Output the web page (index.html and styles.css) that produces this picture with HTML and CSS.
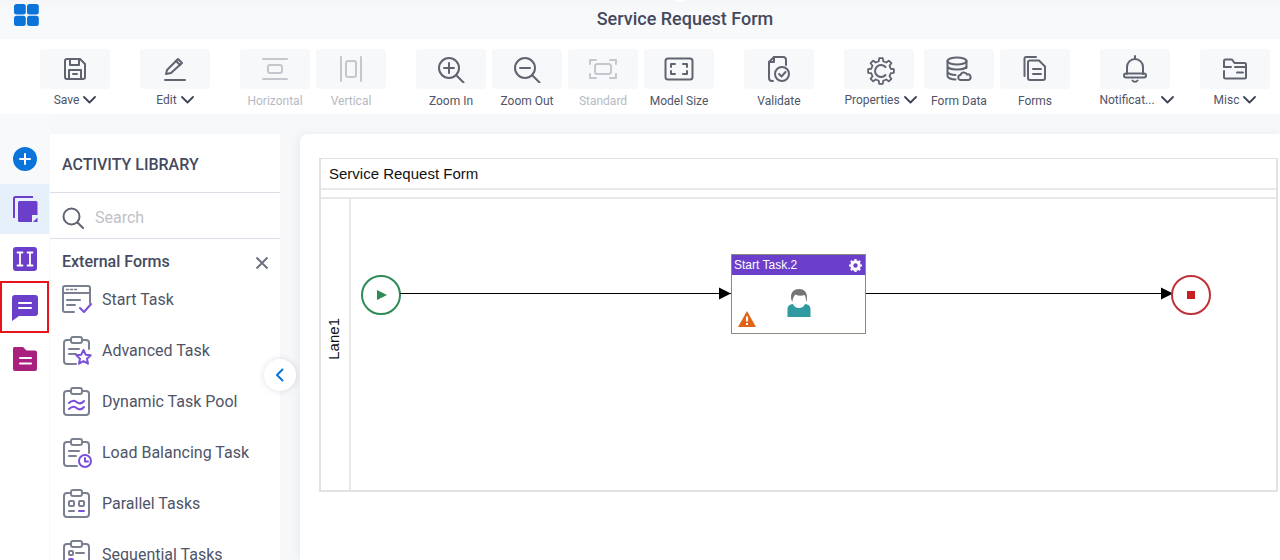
FILE: index.html
```html
<!DOCTYPE html>
<html lang="en">
<head>
<meta charset="utf-8">
<title>Service Request Form</title>
<link rel="stylesheet" href="styles.css">
</head>
<body>
<div class="app">
  <header class="topbar">
    <svg class="logo" width="25" height="22" viewBox="0 0 25 22"><rect x="0" y="0" width="11.800" height="10.500" rx="2.500"/><rect x="13" y="0" width="11.800" height="10.500" rx="2.500"/><rect x="0" y="11.800" width="11.800" height="10.200" rx="2.500"/><rect x="13" y="11.800" width="11.800" height="10.200" rx="2.500"/></svg>
    <h1 class="title">Service Request Form</h1>
    <span class="top-notch"></span>
  </header>

  <nav class="toolbar">
    <div class="tool">
      <div class="tool-btn"><svg class="ico" width="26" height="26" viewBox="0 0 26 26"><path d="M5 3h13l5 5v13a2 2 0 0 1-2 2H5a2 2 0 0 1-2-2V5a2 2 0 0 1 2-2z"/><path d="M8 3v6h9V3"/><path d="M7 23v-9h12v9"/><path d="M11 18h4"/></svg></div>
      <div class="tool-label drop">Save<svg class="chev" width="13" height="8" viewBox="0 0 13 8"><path d="M1 1l5.500 5.500L12 1"/></svg></div>
    </div>
    <div class="tool sep">
      <div class="tool-btn"><svg class="ico" width="26" height="26" viewBox="0 0 26 26"><path d="M4 18l1-4L16 3l4 4L9 17z"/><path d="M14 5l4 4"/><path d="M3 24h20"/></svg></div>
      <div class="tool-label drop">Edit<svg class="chev" width="13" height="8" viewBox="0 0 13 8"><path d="M1 1l5.500 5.500L12 1"/></svg></div>
    </div>
    <div class="tool sep off">
      <div class="tool-btn"><svg class="ico" width="26" height="26" viewBox="0 0 26 26"><path d="M1 3h24M1 23h24"/><rect x="6" y="9" width="14" height="8" rx="2"/></svg></div>
      <div class="tool-label">Horizontal</div>
    </div>
    <div class="tool off">
      <div class="tool-btn"><svg class="ico" width="26" height="26" viewBox="0 0 26 26"><path d="M3 1v24M23 1v24"/><rect x="8" y="5" width="10" height="16" rx="2"/></svg></div>
      <div class="tool-label">Vertical</div>
    </div>
    <div class="tool sep">
      <div class="tool-btn"><svg class="ico" width="28" height="28" viewBox="0 -1 28 28"><circle cx="12" cy="12" r="10"/><path d="M19.500 19.500l7 7M12 7v10M7 12h10"/></svg></div>
      <div class="tool-label">Zoom In</div>
    </div>
    <div class="tool">
      <div class="tool-btn"><svg class="ico" width="28" height="28" viewBox="0 -1 28 28"><circle cx="12" cy="12" r="10"/><path d="M19.500 19.500l7 7M7 12h10"/></svg></div>
      <div class="tool-label">Zoom Out</div>
    </div>
    <div class="tool off">
      <div class="tool-btn"><svg class="ico" width="30" height="24" viewBox="0 0 30 24"><path d="M2 7V3h6M22 3h6v4M28 17v4h-6M8 21H2v-4"/><rect x="7" y="7" width="16" height="10" rx="2.500"/></svg></div>
      <div class="tool-label">Standard</div>
    </div>
    <div class="tool">
      <div class="tool-btn"><svg class="ico" width="30" height="24" viewBox="0 0 30 24"><rect x="1.500" y="1.500" width="27" height="21" rx="2.500"/><path d="M7 10V7h4M19 7h4v3M23 14v3h-4M11 17H7v-3"/></svg></div>
      <div class="tool-label">Model Size</div>
    </div>
    <div class="tool sep">
      <div class="tool-btn"><svg class="ico" width="26" height="28" viewBox="0 0 26 28"><path d="M7 26H6a3 3 0 0 1-3-3V7l5-5h9a3 3 0 0 1 3 3v5"/><path d="M3 7h5V2"/><circle cx="16" cy="19" r="7"/><path d="M13 19l2.500 2.500L19.500 17"/></svg></div>
      <div class="tool-label">Validate</div>
    </div>
    <div class="tool sep">
      <div class="tool-btn"><svg class="ico" width="32" height="32" viewBox="-4 -4 32 32"><path class="thin" d="M11.750 4.260L12.190 1.130H15.810L16.250 4.260L19.300 5.520L21.820 3.620L24.380 6.180L22.480 8.700L23.740 11.750L26.870 12.190V15.810L23.740 16.250L22.480 19.300L24.380 21.820L21.820 24.380L19.300 22.480L16.250 23.740L15.810 26.870H12.190L11.750 23.740L8.700 22.480L6.180 24.380L3.620 21.820L5.520 19.300L4.260 16.250L1.130 15.810V12.190L4.260 11.750L5.520 8.700L3.620 6.180L6.180 3.620L8.700 5.520Z"/><path d="M18.500 10a6 6 0 1 0 0 8"/></svg></div>
      <div class="tool-label drop shift">Properties<svg class="chev" width="13" height="8" viewBox="0 0 13 8"><path d="M1 1l5.500 5.500L12 1"/></svg></div>
    </div>
    <div class="tool near">
      <div class="tool-btn"><svg class="ico" width="26" height="26" viewBox="0 0 26 26"><ellipse cx="11" cy="5" rx="9.500" ry="3.500"/><path d="M1.500 5v15c0 2 4 3.500 8 3.500M20.500 5v7M1.500 10c0 2 4 3.500 9.500 3.500s9.500-1.500 9.500-3.500M1.500 15.500c0 2 4 3.500 8 3.500"/><path d="M15 24a2.500 2.500 0 0 1-.5-5 3.500 3.500 0 0 1 6.500-.5 2.800 2.800 0 0 1 1.500 5.500z"/></svg></div>
      <div class="tool-label">Form Data</div>
    </div>
    <div class="tool">
      <div class="tool-btn"><svg class="ico" width="24" height="26" viewBox="0 0 24 26"><path d="M13 1H3a1.500 1.500 0 0 0-1.500 1.500V20"/><path d="M7 4.500h9l6 6V22a2 2 0 0 1-2 2H7a2 2 0 0 1-2-2V6.500a2 2 0 0 1 2-2z"/><path d="M10 13h8M10 18h8"/></svg></div>
      <div class="tool-label">Forms</div>
    </div>
    <div class="tool sep">
      <div class="tool-btn"><svg class="ico" width="24" height="28" viewBox="0 0 24 28"><path d="M12 1v3M4 19v-7a8 8 0 0 1 16 0v7"/><rect x="1" y="18.500" width="22" height="4" rx="2"/><path d="M9.500 25.500a3 3 0 0 0 5 0"/></svg></div>
      <div class="tool-label drop wide shift">Notificat...<svg class="chev" width="13" height="8" viewBox="0 0 13 8"><path d="M1 1l5.500 5.500L12 1"/></svg></div>
    </div>
    <div class="tool sep">
      <div class="tool-btn"><svg class="ico" width="26" height="24" viewBox="0 0 26 24"><path d="M2 10V4a1.500 1.500 0 0 1 1.500-1.500H10L12.500 6h10A1.500 1.500 0 0 1 24 7.500V10"/><path d="M2 10h7M2 14v6a1.500 1.500 0 0 0 1.500 1.500h19A1.500 1.500 0 0 0 24 20V10H13"/><path d="M15 15.500h6"/></svg></div>
      <div class="tool-label drop">Misc<svg class="chev" width="13" height="8" viewBox="0 0 13 8"><path d="M1 1l5.500 5.500L12 1"/></svg></div>
    </div>
  </nav>

  <main class="workspace">
    <aside class="rail">
      <div class="rail-item">
        <svg width="26" height="26" viewBox="0 0 26 26"><circle class="r-blue" cx="13" cy="13" r="12"/><path class="r-white" d="M13 8v10M8 13h10"/></svg>
      </div>
      <div class="rail-item active">
        <svg width="26" height="28" viewBox="0 0 26 28"><path class="r-line" d="M2 23V3.500A1.500 1.500 0 0 1 3.500 2H21"/><path class="r-purple" d="M7.500 6H24a1.500 1.500 0 0 1 1.500 1.500V20H20v7H7.500A1.500 1.500 0 0 1 6 25.500V7.500A1.500 1.500 0 0 1 7.500 6z"/><path class="r-purple" d="M25.500 22.500v4.500h-4.500z"/></svg>
      </div>
      <div class="rail-item">
        <svg width="24" height="24" viewBox="0 0 24 24"><rect class="r-purple" width="24" height="24" rx="3"/><path class="r-white thin" d="M4.500 5.500h5M7 5.500v13M4.500 18.500h5M14.500 5.500h5M17 5.500v13M14.500 18.500h5"/></svg>
      </div>
      <div class="rail-item flagged">
        <svg width="26" height="26" viewBox="0 0 26 26"><path class="r-purple" d="M3 0h20a3 3 0 0 1 3 3v15a3 3 0 0 1-3 3H7l-7 5V3a3 3 0 0 1 3-3z"/><path class="r-white" d="M7 8h12M7 13h12"/></svg>
      </div>
      <div class="rail-item">
        <svg width="24" height="24" viewBox="0 0 24 24"><path class="r-magenta" d="M1.500 0H10l3.500 3.500H22A2 2 0 0 1 24 5.500V22a2 2 0 0 1-2 2H2a2 2 0 0 1-2-2V1.500A1.500 1.500 0 0 1 1.500 0z"/><path class="r-white" d="M7 11h11M7 16.500h11"/></svg>
      </div>
    </aside>

    <section class="library">
      <div class="lib-head">ACTIVITY LIBRARY</div>
      <div class="lib-search">
        <svg class="ico search-ico" width="22" height="22" viewBox="0 0 22 22"><circle cx="9.500" cy="9.500" r="8"/><path d="M15.500 15.500l5.500 5.500"/></svg>
        <span>Search</span>
      </div>
      <div class="lib-group">
        <span>External Forms</span>
        <svg class="close" width="14" height="14" viewBox="0 0 14 14"><path d="M1.500 1.500l11 11M12.500 1.500l-11 11"/></svg>
      </div>
      <ul class="lib-list">
        <li><svg class="act" width="30" height="30" viewBox="0 0 30 30"><path d="M12 27H3a2 2 0 0 1-2-2V3a2 2 0 0 1 2-2h23a2 2 0 0 1 2 2v15M1 8h27M5 15h13M5 20h8"/><path class="dots" d="M4.500 4.500h2M8.500 4.500h2M12.500 4.500h2"/><path class="acc" d="M18 23l4 4 7-8"/></svg>Start Task</li>
        <li><svg class="act" width="30" height="30" viewBox="0 0 30 30"><path d="M9 4H5a3 3 0 0 0-3 3v18a3 3 0 0 0 3 3h9M20 4h4a3 3 0 0 1 3 3v6"/><rect x="9" y="1" width="11" height="6" rx="2"/><path d="M7 13h10M7 18h7"/><path class="acc" d="M21.500 14l2.200 4.700 5 .6-3.700 3.400 1 5-4.500-2.500-4.500 2.500 1-5-3.700-3.400 5-.6z"/></svg>Advanced Task</li>
        <li><svg class="act" width="30" height="30" viewBox="0 0 30 30"><path d="M9 4H5a3 3 0 0 0-3 3v18a3 3 0 0 0 3 3h19a3 3 0 0 0 3-3V7a3 3 0 0 0-3-3h-4"/><rect x="9" y="1" width="11" height="6" rx="2"/><path class="acc" d="M7 16c3-3 5-3 7.500-1s5 2 7.500-1M7 22c3-3 5-3 7.500-1s5 2 7.500-1"/></svg>Dynamic Task Pool</li>
        <li><svg class="act" width="30" height="30" viewBox="0 0 30 30"><path d="M9 4H5a3 3 0 0 0-3 3v18a3 3 0 0 0 3 3h10M20 4h4a3 3 0 0 1 3 3v8"/><rect x="9" y="1" width="11" height="6" rx="2"/><path d="M7 13h10M7 18h7"/><circle class="acc" cx="23" cy="23" r="6"/><path class="acc" d="M23 20v3.500h3"/></svg>Load Balancing Task</li>
        <li><svg class="act" width="30" height="30" viewBox="0 0 30 30"><path d="M9 4H5a3 3 0 0 0-3 3v18a3 3 0 0 0 3 3h19a3 3 0 0 0 3-3V7a3 3 0 0 0-3-3h-4"/><rect x="9" y="1" width="11" height="6" rx="2"/><rect x="7" y="12" width="5" height="5" rx="1"/><rect x="17" y="12" width="5" height="5" rx="1"/><path d="M7 22h5"/><path class="acc" d="M17 22h5"/></svg>Parallel Tasks</li>
        <li><svg class="act" width="30" height="30" viewBox="0 0 30 30"><path d="M9 4H5a3 3 0 0 0-3 3v18a3 3 0 0 0 3 3h19a3 3 0 0 0 3-3V7a3 3 0 0 0-3-3h-4"/><rect x="9" y="1" width="11" height="6" rx="2"/><rect x="7" y="11" width="4" height="4" rx="1"/><path d="M14 13h8"/><rect class="acc" x="7" y="19" width="4" height="4" rx="1"/><path class="acc" d="M14 21h8"/></svg>Sequential Tasks</li>
      </ul>
      <button class="collapse" type="button" aria-label="Collapse"><svg width="10" height="14" viewBox="0 0 10 14"><path d="M7.500 1.500L2 7l5.500 5.500"/></svg></button>
    </section>

    <section class="canvas">
      <div class="pool">
        <div class="pool-title">Service Request Form</div>
        <div class="pool-spacer"></div>
        <div class="lane">
          <div class="lane-head"><span>Lane1</span></div>
          <div class="lane-body">
            <svg class="flow" width="926" height="290" viewBox="0 0 926 290">
              <circle class="start" cx="30" cy="96" r="19"/>
              <path class="start-f" d="M26 91l10 5-10 5z"/>
              <path class="wire" d="M49 94.500h331M515 94.500h306"/>
              <path class="head" d="M368 88.500l12 6-12 6zM810 88.500l12 6-12 6z"/>
              <circle class="end" cx="840" cy="96" r="19"/>
              <rect class="end-f" x="836" y="92" width="8" height="8"/>
            </svg>
            <div class="task">
              <div class="task-head">
                <span>Start Task.2</span>
                <svg width="13" height="13" viewBox="0 0 13 13"><circle class="gear-ring" cx="6.500" cy="6.500" r="3.700"/><path class="gear-teeth" d="M6.500 0v2.500M6.500 10.500V13M0 6.500h2.500M10.500 6.500H13M1.900 1.900l1.800 1.800M9.300 9.300l1.800 1.800M11.100 1.900L9.300 3.700M3.700 9.300l-1.800 1.800"/></svg>
              </div>
              <div class="task-body">
                <svg class="person" width="24" height="29" viewBox="0 0 24 29"><path class="p-body" d="M6 16c1 2.500 3 4 6 4s5-1.500 6-4c3.500.5 5.500 2 5.500 5v8H.5v-8c0-3 2-4.500 5.500-5z"/><path class="p-hair" d="M12 1C7 1 4 4 4 9c0 2 .5 3.500 1.500 5 0-3 1-6 3-7.500 3 1.500 6 1.500 9 .5 1.500 2 1.500 4.500 1.500 7 1-1.500 1-3.500 1-5 0-5-3-8-8-8z"/></svg>
                <svg class="warn" width="18" height="16" viewBox="0 0 18 16"><path class="w-tri" d="M9 0l9 16H0z"/><path class="w-mark" d="M9 5.500v5M9 12v2"/></svg>
              </div>
            </div>
          </div>
        </div>
      </div>
    </section>
  </main>
</div>
</body>
</html>
```
FILE: styles.css
```css
* { box-sizing: border-box; }
html, body { margin: 0; padding: 0; height: 100%; overflow: hidden; }
body { font-family: Roboto, "Liberation Sans", sans-serif; color: #454a5e; background: #f7f8fa; }

.app { width: 1280px; height: 560px; display: flex; flex-direction: column; overflow: hidden; }

.topbar { height: 39px; flex: none; position: relative; display: flex; align-items: center; justify-content: center; padding: 0 0 2px 90px; background: linear-gradient(#f4f5f7, #f8f9fb 12px); }
.logo { position: absolute; left: 14px; top: 4px; fill: #0a74da; }
.title { margin: 0; font-size: 18px; font-weight: 500; color: #454a5e; letter-spacing: 0; }
.top-notch { position: absolute; left: 672px; top: -8px; width: 16px; height: 10px; border-radius: 50%; background: #fff; }

.toolbar { height: 75px; flex: none; background: #fff; display: flex; padding: 10px 0 0 40px; gap: 6px; }
.tool { width: 70px; flex: none; display: flex; flex-direction: column; align-items: center; }
.tool.sep { margin-left: 24px; }
.tool.near { margin-left: 4px; }
.tool-btn { width: 70px; height: 40px; border-radius: 4px; background: #f7f8fa; display: flex; align-items: center; justify-content: center; }
.tool-label { margin-top: 5px; height: 14px; line-height: 14px; font-size: 12px; color: #4f5468; white-space: nowrap; }
.tool-label.drop { margin-top: 4px; display: flex; align-items: center; gap: 4px; }
.tool-label.wide { gap: 6px; }
.tool-label.shift { margin-left: 3px; }
.tool.off .tool-label { color: #b6b9c1; }
.ico { fill: none; stroke: #5f6470; stroke-width: 2; stroke-linecap: round; stroke-linejoin: round; }
.ico .thin { stroke-width: 1.800; }
.tool.off .ico { stroke: #c4c7ce; }
.chev { fill: none; stroke: #3f4356; stroke-width: 1.800; stroke-linecap: round; stroke-linejoin: round; }

.workspace { flex: 1; display: flex; min-height: 0; position: relative; }

.rail { width: 49px; flex: none; display: flex; flex-direction: column; padding-top: 20px; background: linear-gradient(#f8f9fb 70px, #fff 120px); }
.rail-item { height: 50px; flex: none; display: flex; align-items: center; justify-content: center; }
.rail-item.active { background: #e6f0fb; }
.rail-item.flagged { height: 52px; margin: -3px 0 1px; padding-top: 2px; border: 2px solid #e8141c; }
.r-blue { fill: #0a74da; }
.r-purple { fill: #6b3fc9; }
.r-magenta { fill: #a9217f; }
.r-white { fill: none; stroke: #fff; stroke-width: 2; stroke-linecap: round; }
.r-white.thin { stroke-width: 1.800; }
.r-line { fill: none; stroke: #6b3fc9; stroke-width: 2; }

.library { width: 230px; flex: none; margin: 20px 0 0 1px; background: #fff; position: relative; }
.lib-head { height: 59px; padding: 21px 0 0 12px; font-size: 16px; line-height: 19px; font-weight: 500; color: #454a5e; border-bottom: 1px solid #dcdde6; }
.lib-search { height: 46px; display: flex; align-items: center; gap: 11px; padding: 4px 0 0 12px; border-bottom: 1px solid #dcdde6; font-size: 16px; color: #bfc1c9; }
.lib-group { height: 46px; display: flex; align-items: center; justify-content: space-between; padding: 0 11px 0 12px; font-size: 16px; font-weight: 500; color: #454a5e; }
.lib-group span { margin-bottom: 2px; }
.close { fill: none; stroke: #6e7280; stroke-width: 2; margin-top: 2px; }
.lib-list { list-style: none; margin: -11px 0 0; padding: 0 0 0 12px; }
.lib-list li { height: 51px; display: flex; align-items: center; gap: 10px; font-size: 16px; color: #4f5468; white-space: nowrap; }
.act { flex: none; fill: none; stroke: #7a8090; stroke-width: 2; stroke-linecap: round; stroke-linejoin: round; }
.act .acc { stroke: #7a50db; }
.act .dots { stroke-width: 1.500; }
.collapse { position: absolute; right: -16px; top: 225px; width: 32px; height: 32px; padding: 0; border: 0; border-radius: 50%; background: #fff; box-shadow: 0 0 6px rgba(70, 80, 110, .18); display: flex; align-items: center; justify-content: center; }
.collapse svg { fill: none; stroke: #0a74da; stroke-width: 2; stroke-linecap: round; stroke-linejoin: round; }

.canvas { flex: 1; margin: 20px 0 0 20px; padding: 24px 2px 0 19px; background: #fff; border-top-left-radius: 8px; box-shadow: -3px 0 8px rgba(70, 80, 110, .07); min-width: 0; }
.pool { height: 334px; border: 2px solid #e2e2e2; border-width: 1px 2px 2px 2px; display: flex; flex-direction: column; font-family: "Liberation Sans", Arial, sans-serif; color: #111; }
.pool-title { height: 31px; flex: none; padding-left: 8px; font-size: 15px; line-height: 30px; border-bottom: 2px solid #e8e8e8; }
.pool-spacer { height: 9px; flex: none; border-bottom: 2px solid #e8e8e8; }
.lane { flex: 1; display: flex; min-height: 0; }
.lane-head { width: 30px; flex: none; border-right: 2px solid #e8e8e8; display: flex; align-items: center; justify-content: center; }
.lane-head span { writing-mode: vertical-rl; transform: rotate(180deg); font-size: 15px; margin: 0 4px 12px 0; }
.lane-body { flex: 1; position: relative; min-width: 0; }
.flow { position: absolute; left: 0; top: 0; }
.start { fill: #fff; stroke: #2e8b57; stroke-width: 2; }
.start-f { fill: #2e8b57; }
.wire { fill: none; stroke: #000; stroke-width: 1; }
.head { fill: #000; }
.end { fill: #fff; stroke: #be3238; stroke-width: 2; }
.end-f { fill: #c81e24; }

.task { position: absolute; left: 380px; top: 55px; width: 135px; height: 80px; border: 1px solid #8a8a7e; background: #fff; display: flex; flex-direction: column; }
.task-head { height: 20px; flex: none; background: #6b3fc9; color: #fff; font-size: 12px; display: flex; align-items: center; justify-content: space-between; padding: 0 3px 0 2px; }
.gear-ring { fill: none; stroke: #fff; stroke-width: 3; }
.gear-teeth { fill: none; stroke: #fff; stroke-width: 2.200; }
.task-body { flex: 1; position: relative; }
.person { position: absolute; left: 55px; top: 13px; }
.p-body { fill: #2f9aa0; }
.p-hair { fill: #757575; }
.warn { position: absolute; left: 6px; top: 36px; }
.w-tri { fill: #e0651a; }
.w-mark { fill: none; stroke: #fff; stroke-width: 2; }
```
